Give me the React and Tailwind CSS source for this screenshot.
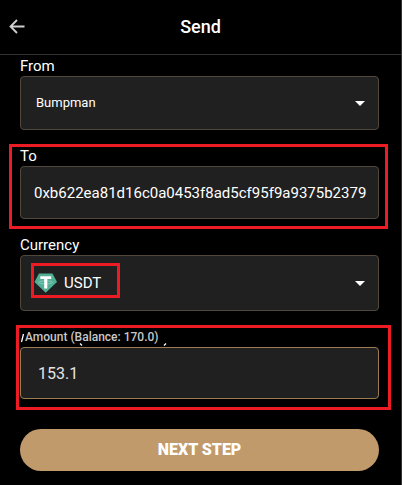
import { useState } from "react";

const FIELD = "block w-full appearance-none bg-[#202020] border border-[#51473b] rounded-[4px] outline-none";

function BackArrow() {
  return (
    <svg width="16" height="16" viewBox="0 0 16 16" fill="none" stroke="#cfcfcf" strokeWidth="1.8">
      <path d="M8 1 L1.5 7.5 L8 14 M1.5 7.5 H15.5" />
    </svg>
  );
}

function Caret() {
  return (
    <svg className="absolute right-3.5 top-1/2 -mt-0.5 pointer-events-none" width="10" height="5" viewBox="0 0 10 5">
      <path d="M0 0 H10 L5 5 Z" fill="#fff" />
    </svg>
  );
}

function TetherIcon() {
  return (
    <svg className="absolute left-3.5 top-1/2 -mt-2.5 pointer-events-none" width="24" height="20" viewBox="0 0 24 20">
      <path d="M5 0.5 H18.5 L23 9 L11.7 19.8 L0.5 9 Z" fill="#50af95" />
      <ellipse cx="11.7" cy="9.4" rx="6.8" ry="1.5" fill="none" stroke="#b5ddd1" strokeWidth="0.5" />
      <path d="M6.3 3.2 H17.2 V6 H13.3 V15.5 H10.2 V6 H6.3 Z" fill="#fff" />
    </svg>
  );
}

function Highlight({ className }) {
  return <div className={`absolute border-3 border-[#ed1c24] pointer-events-none ${className}`} />;
}

export default function App() {
  const [from, setFrom] = useState("Bumpman");
  const [to, setTo] = useState("0xb622ea81d16c0a0453f8ad5cf95f9a9375b2379");
  const [currency, setCurrency] = useState("USDT");
  const [amount, setAmount] = useState("153.1");

  return (
    <div className="min-h-screen bg-black text-white border-r border-[#333333] font-['Roboto',sans-serif]">
      <header className="relative flex items-center justify-center h-[55px] border-b border-[#333333]">
        <button type="button" aria-label="Back" className="absolute left-[9px]"><BackArrow /></button>
        <h1 className="text-[18px] leading-5 font-medium">Send</h1>
      </header>

      <form onSubmit={(e) => e.preventDefault()} className="flex flex-col gap-4 pl-5 pr-[22px] pt-px">
        <div>
          <label htmlFor="from" className="block text-[15px] leading-5">From</label>
          <div className="relative">
            <select id="from" value={from} onChange={(e) => setFrom(e.target.value)} className={`${FIELD} h-[54px] pl-[15px] text-[13px]`}>
              <option>Bumpman</option>
            </select>
            <Caret />
          </div>
        </div>

        <div className="relative">
          <label htmlFor="to" className="block text-[15px] leading-5">To</label>
          <input id="to" value={to} onChange={(e) => setTo(e.target.value)} className={`${FIELD} h-[53px] pl-[13px] pr-2 text-[15px]`} />
          <Highlight className="-left-[11px] -right-[9px] -top-0.5 -bottom-2.5" />
        </div>

        <div>
          <label htmlFor="currency" className="block text-[15px] leading-5">Currency</label>
          <div className="relative">
            <select id="currency" value={currency} onChange={(e) => setCurrency(e.target.value)} className={`${FIELD} h-14 pl-[43px] text-[15px]`}>
              <option>USDT</option>
            </select>
            <TetherIcon />
            <Caret />
            <Highlight className="left-[11px] top-2 w-[89px] h-[35px]" />
          </div>
        </div>

        <div className="relative">
          <label htmlFor="amount" className="block pl-[5px] text-[12px] leading-5 font-medium text-[#c8c8c8]">Amount (Balance: 170.0)</label>
          <svg className="absolute left-0 top-0 pointer-events-none" width="150" height="20" viewBox="0 0 150 20" stroke="#fff">
            <path d="M1.5 15 L3.5 7" strokeWidth="1.3" />
            <path d="M60 16.5 L62 18.5 M144 18.5 L146 16.5" strokeWidth="1.3" />
          </svg>
          <input id="amount" inputMode="decimal" value={amount} onChange={(e) => setAmount(e.target.value)}
            className={`${FIELD} h-[52px] px-[17px] border-[#9c7b52]! text-[16px] text-[#e4e4e4]`} />
          <Highlight className="-left-1 -right-3 -top-0.5 -bottom-[11px]" />
        </div>

        <button type="submit" className="mt-3.5 h-[42px] rounded-full bg-[#c19a6b] text-[16px] font-black">NEXT STEP</button>
      </form>
    </div>
  );
}
